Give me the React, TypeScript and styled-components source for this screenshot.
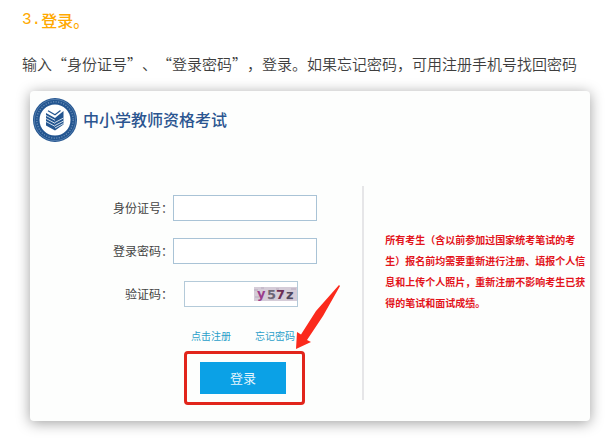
import React from "react";
import styled, { createGlobalStyle } from "styled-components";

const GlobalStyle = createGlobalStyle`
  * { box-sizing: border-box; }
  body {
    margin: 0;
    background: #fff;
    color: #3e3e3e;
    font-family: "Noto Sans CJK SC", sans-serif;
    text-spacing-trim: space-all;
  }
`;

const Article = styled.main`
  padding: 8px 22px 20px;
`;

const StepHeading = styled.h2`
  display: flex;
  margin: 0;
  font-size: 16px;
  line-height: 24px;
  font-weight: 500;
  color: #ffa900;
`;

const StepNumber = styled.span`
  font-family: "Liberation Mono", monospace;
`;

const Paragraph = styled.p`
  margin: 20px 0 15px;
  font-size: 15px;
  line-height: 24px;
  font-weight: 350;
`;

const Card = styled.section`
  margin-left: 8px;
  padding: 6px 0 21px;
  border-radius: 4px;
  background: #fdfefd;
  box-shadow: 0 2px 14px rgba(0, 0, 0, 0.38);
`;

const CardHeader = styled.header`
  display: flex;
  align-items: center;
  gap: 5px;
  padding-left: 2px;
`;

const SiteTitle = styled.h1`
  margin: 0 0 2px;
  font-size: 16px;
  line-height: 24px;
  font-weight: 500;
  color: #2b5590;
`;

const CardBody = styled.div`
  display: grid;
  grid-template-columns: 1.48fr 1fr;
  margin-top: 43px;
`;

const LoginForm = styled.form`
  display: flex;
  flex-direction: column;
  border-right: 2px solid #e6e6e8;
  padding-top: 9px;
`;

const Field = styled.div`
  display: grid;
  grid-template-columns: 143px 144px;
  align-items: center;
  margin-bottom: 17px;
`;

const Label = styled.label`
  font-size: 12px;
  line-height: 16px;
  text-align: right;
  color: #444;
`;

const TextInput = styled.input`
  width: 100%;
  height: 26px;
  padding: 2px 6px;
  border: 1px solid #a9c3d6;
  background: #fff;
  font-size: 12px;
`;

const CodeBox = styled.div`
  display: flex;
  align-items: center;
  height: 26px;
  margin: 0 19px 0 11px;
  border: 1px solid #b4cad9;
  background: #fff;
`;

const CodeInput = styled.input`
  flex: 1;
  min-width: 0;
  height: 24px;
  padding: 2px 6px;
  border: 0;
  background: transparent;
  font-size: 12px;
`;

const Captcha = styled.svg`
  flex: none;
  font-family: "DejaVu Sans", sans-serif;
  font-size: 13px;
  font-weight: 700;
`;

const Links = styled.nav`
  display: flex;
  gap: 24px;
  padding: 4px 0 0 161px;
  font-size: 10px;
  line-height: 16px;
`;

const TextLink = styled.a`
  color: #2a9fc9;
  text-decoration: none;
`;

const Highlight = styled.div`
  position: relative;
  align-self: flex-start;
  margin: 7px 0 -5px 154px;
  padding: 8px 16px 8px 13px;
  border: 3px solid #e1251b;
  border-radius: 4px;
`;

const SubmitButton = styled.button`
  display: block;
  width: 86px;
  height: 32px;
  padding: 0 0 2px;
  border: 0;
  background: #0ba1e6;
  color: #e4f5fd;
  font-family: inherit;
  font-size: 13px;
  cursor: pointer;
`;

const Arrow = styled.svg`
  position: absolute;
  right: -40px;
  bottom: 50px;
  pointer-events: none;
`;

const Notice = styled.p`
  align-self: start;
  margin: 43px 2px 0 21px;
  font-size: 10px;
  line-height: 21px;
  font-weight: 700;
  color: #e3141b;
`;

function Emblem() {
  return (
    <svg width="46" height="46" viewBox="0 0 46 46" aria-hidden="true">
      <circle cx="23" cy="23" r="22" fill="#235590" />
      <circle cx="23" cy="23" r="20.6" fill="none" stroke="#6d93bd" strokeWidth="0.6" />
      <circle cx="23" cy="23" r="18.2" fill="none" stroke="#a9c2dc" strokeWidth="1.4" strokeDasharray="1.2 1.4" opacity="0.5" />
      <circle cx="23" cy="23" r="15.5" fill="#fff" />
      <path d="M14 16l9 5 8.500-7v13.500L23 33.500l-9-5z" fill="#235590" />
      <path d="M14 18.500l9 4.800M14 21.500l9 4.800M14 24.500l9 4.800M23 25.500l8.500-4.500M23 28.500l8.500-4.500M23 31l8.500-4.500" fill="none" stroke="#e4edf5" strokeWidth="0.9" />
      <path d="M16 13.800l7 4 5.500-4.300" fill="none" stroke="#235590" strokeWidth="1.2" />
    </svg>
  );
}

export default function App() {
  return (
    <>
      <GlobalStyle />
      <Article lang="zh-CN">
        <StepHeading>
          <StepNumber>3.</StepNumber>登录。
        </StepHeading>
        <Paragraph>输入“身份证号”、“登录密码”，登录。如果忘记密码，可用注册手机号找回密码</Paragraph>
        <Card>
          <CardHeader>
            <Emblem />
            <SiteTitle>中小学教师资格考试</SiteTitle>
          </CardHeader>
          <CardBody>
            <LoginForm onSubmit={(e) => e.preventDefault()}>
              <Field>
                <Label htmlFor="id-number">身份证号：</Label>
                <TextInput id="id-number" type="text" />
              </Field>
              <Field>
                <Label htmlFor="password">登录密码：</Label>
                <TextInput id="password" type="password" />
              </Field>
              <Field>
                <Label htmlFor="code">验证码：</Label>
                <CodeBox>
                  <CodeInput id="code" type="text" />
                  <Captcha width="43" height="14" viewBox="0 0 43 14">
                    <rect width="43" height="14" fill="#d5ccd8" />
                    <path d="M0 3h4M7 1h3M15 12h5M22 2h3M33 12h6M37 2h5M1 10h4M27 7h3" stroke="#b8abbe" />
                    <text x="3" y="11" fill="#9b3d8c">y</text>
                    <text x="13" y="12" fill="#6d6676">5</text>
                    <text x="22" y="12" fill="#6d2c55">7</text>
                    <text x="32" y="12" fill="#51485f">z</text>
                  </Captcha>
                </CodeBox>
              </Field>
              <Links>
                <TextLink href="#register">点击注册</TextLink>
                <TextLink href="#forgot">忘记密码</TextLink>
              </Links>
              <Highlight>
                <SubmitButton type="submit">登录</SubmitButton>
                <Arrow width="48" height="68" viewBox="0 0 48 68" aria-hidden="true">
                  <path d="M45 1L22 27 7 50.500 3 48 2 65 17 58 13 56 29 32 46 2z" fill="#fb2a1c" />
                </Arrow>
              </Highlight>
            </LoginForm>
            <Notice>
              所有考生（含以前参加过国家统考笔试的考生）报名前均需要重新进行注册、填报个人信息和上传个人照片，重新注册不影响考生已获得的笔试和面试成绩。
            </Notice>
          </CardBody>
        </Card>
      </Article>
    </>
  );
}
